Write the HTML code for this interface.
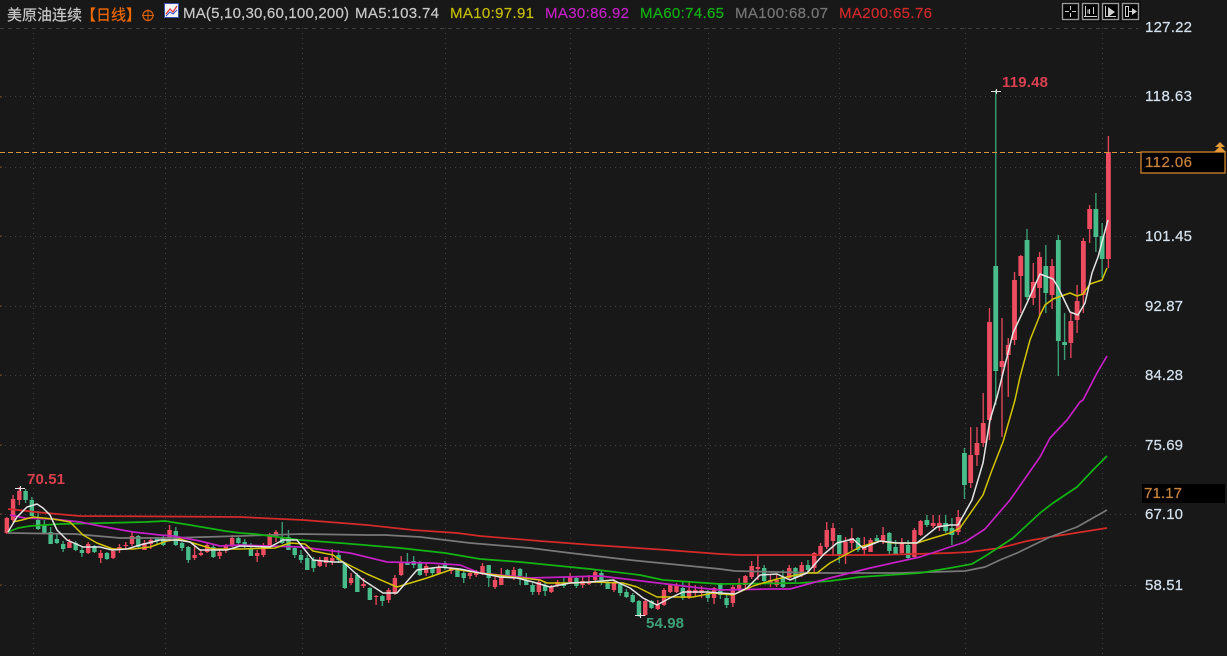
<!DOCTYPE html>
<html><head><meta charset="utf-8"><title>美原油连续</title>
<style>
html,body{margin:0;padding:0;background:#181818;width:1227px;height:656px;overflow:hidden}
svg{display:block;position:absolute;left:0;top:0;filter:blur(.35px)}
text{font-family:"Liberation Sans","Noto Sans CJK SC",sans-serif;font-size:15px;fill:currentColor;stroke:currentColor;stroke-width:.2}
.ax{color:#d4e0ec}
.b{font-weight:bold;font-size:15px;stroke-width:0}
</style></head><body>
<svg id="c" width="1227" height="656" viewBox="0 0 1227 656" xmlns="http://www.w3.org/2000/svg">
<rect width="1227" height="656" fill="#181818"/>
<g stroke="#404040" stroke-width="1" stroke-dasharray="1 4" shape-rendering="crispEdges">
<path d="M0 96.5H1138M0 167.5H1138M0 236.5H1138M0 306.5H1138M0 375.5H1138M0 445.5H1138M0 514.5H1138M0 585.5H1138"/>
<path d="M33.5 28V656M165.5 28V656M302.5 28V656M445.5 28V656M570.5 28V656M708.5 28V656M839.5 28V656M965.5 28V656M1102.5 28V656"/>
</g>
<path d="M0 28.5H1138" stroke="#404040" stroke-dasharray="4 4" shape-rendering="crispEdges"/>
<path d="M0 97h2M0 167h2M0 236h2M0 306h2M0 375h2M0 445h2M0 514h2M0 585h2" stroke="#6b4a20" shape-rendering="crispEdges"/>
<g id="candles"></g>
<g fill="none" stroke-linejoin="round" stroke-width="1.5">
<polyline stroke="#d42a2a" stroke-width="1.7" points="8,509 27,511 35,512 46,513 68,515 80,516 240,517 303,520 367,525 413,530 457,533 480,536 540,541 593,545 667,550 720,554 740,555 810,555 880,555 950,553 970,552 1000,548 1027,541 1050,537 1107,528"/>
<polyline stroke="#787878" stroke-width="1.7" points="8,533 75,534 120,538 170,538 240,536 300,534 367,535 385,535 420,537 470,543 530,548 570,553 630,560 680,565 720,569 735,571 820,573 900,573 965,571 985,567 1000,560 1017,553 1050,537 1077,527 1107,510"/>
<polyline stroke="#14b414" stroke-width="1.7" points="8,532 18,528 30,526 60,524 105,523 145,522 165,521 190,525 225,531 240,533 255,534 300,540 340,543 400,548 445,553 480,559 520,562 560,566 590,569 640,575 663,580 720,584 800,583 830,581 860,577 920,573 950,568 972,564 987,555 1013,538 1040,513 1053,503 1077,487 1093,470 1107,456"/>
<polyline stroke="#c420c4" stroke-width="1.7" points="10,515 25,518 53,519 80,522 100,526 133,532 160,535 173,536 200,541 220,546 240,545 300,547 350,553 387,562 430,563 460,565 480,573 530,578 600,576 650,582 700,588 720,590 770,589 790,589 830,578 870,568 920,557 950,547 965,542 985,529 1010,500 1040,457 1050,438 1067,420 1080,402 1083,400 1097,373 1107,356"/>
<polyline stroke="#d2c400" points="13,522 22,520 33,517 53,519 70,522 83,535 97,543 113,549 133,549 150,547 167,541 180,539 193,543 213,549 240,549 275,548 290,543 305,544 313,551 333,555 343,562 367,574 397,587 427,578 453,569 480,573 513,577 540,580 547,583 573,583 593,582 623,583 637,587 657,597 693,597 713,593 733,595 753,586 777,579 807,573 817,573 830,563 860,547 880,541 893,543 917,543 933,538 950,533 960,528 983,495 992,470 1003,442 1015,400 1020,377 1030,340 1040,315 1045,305 1053,299 1070,293 1077,296 1083,294 1090,284 1102,280 1107,268"/>
<polyline stroke="#e4e4e4" points="8,532 17,517 27,507 37,504 43,508 50,515 57,530 67,540 83,547 100,547 112,550 127,549 140,545 160,540 177,540 190,542 200,550 227,550 240,546 270,547 283,540 297,540 313,560 333,562 343,562 363,580 383,593 397,593 417,570 440,567 460,569 480,573 500,577 517,578 533,582 550,587 570,583 590,582 613,580 630,588 643,598 657,605 670,598 683,592 707,592 720,593 735,594 747,588 760,575 777,574 790,580 807,573 823,555 837,543 853,539 863,548 880,541 897,543 917,543 937,527 950,525 958,525 972,500 983,463 990,420 997,397 1013,333 1027,303 1040,274 1053,279 1058,287 1070,312 1078,315 1085,303 1092,273 1098,257 1108,220"/>
</g>
<path d="M15 488.5h10M20.5 486v5M991 91.5h10M996.5 89v5M635 615.5h10M640.5 613v5" stroke="#e0e0e0" shape-rendering="crispEdges"/>
<path d="M0 152.5H1141" stroke="#d9943a" stroke-dasharray="5 3" shape-rendering="crispEdges"/>

<text x="7" y="20" color="#c8c8c8" textLength="75">美原油连续</text>
<text x="81" y="20" color="#ee6a00" textLength="60">【日线】</text>
<circle cx="148" cy="15.5" r="5" fill="none" stroke="#d9600a" stroke-width="1.2"/>
<path d="M142 15.5h12M148 9.5v12" stroke="#d9600a" shape-rendering="crispEdges"/>
<rect x="164.500" y="3.500" width="14" height="14" fill="#f4f4fa" stroke="#3a4fa8"/>
<path d="M166 14l4-5 3 3 4-6" fill="none" stroke="#e03030" stroke-width="1.2"/>
<path d="M166 16l4-4 3 2 4-4" fill="none" stroke="#3050d0" stroke-width="1"/>
<text x="183" y="18" color="#c8c8c8" textLength="166">MA(5,10,30,60,100,200)</text>
<text x="355" y="18" color="#c8c8c8" textLength="84">MA5:103.74</text>
<text x="450" y="18" color="#c4bc00" textLength="84">MA10:97.91</text>
<text x="545" y="18" color="#c020c0" textLength="84">MA30:86.92</text>
<text x="640" y="18" color="#12b012" textLength="84">MA60:74.65</text>
<text x="735" y="18" color="#757575" textLength="93">MA100:68.07</text>
<text x="839" y="18" color="#cf2a2a" textLength="93">MA200:65.76</text>

<rect x="1060" y="1" width="81" height="21" fill="#000" opacity=".35"/>
<g fill="#000" stroke="#9a9a9a" stroke-width="1.4">
<rect x="1062.500" y="3.500" width="16" height="16"/><rect x="1082.500" y="3.500" width="16" height="16"/><rect x="1102.500" y="3.500" width="16" height="16"/><rect x="1122.500" y="3.500" width="16" height="16"/>
</g>
<g stroke="#d0d0d0" fill="none" shape-rendering="crispEdges">
<path d="M1065 11.500h4M1072 11.500h4M1070.500 6v4M1070.500 13v4"/>
<path d="M1085.500 6v10M1084 16.500h13M1088 9.500v4M1089.500 9v5M1093.500 7v7"/>
<path d="M1105.500 6v11M1105 16.500h11"/>
<path d="M1125.500 6v11M1128.500 6v11M1125 6.500h3M1125 16.500h3M1128 11.500h5"/>
</g>
<path d="M1108 7l7 5-7 5z" fill="#d0d0d0"/>
<path d="M1132 8l5 3.500-5 3.500z" fill="#d0d0d0"/>

<text class="ax" x="1145" y="32" textLength="47">127.22</text>
<text class="ax" x="1145" y="101" textLength="47">118.63</text>
<text class="ax" x="1145" y="241" textLength="47">101.45</text>
<text class="ax" x="1145" y="311" textLength="38">92.87</text>
<text class="ax" x="1145" y="380" textLength="38">84.28</text>
<text class="ax" x="1145" y="450" textLength="38">75.69</text>
<text class="ax" x="1145" y="519" textLength="38">67.10</text>
<text class="ax" x="1145" y="590" textLength="38">58.51</text>

<rect x="1141" y="152" width="84" height="21" fill="#000" stroke="#c07a28" stroke-width="1.400"/>
<text x="1145" y="167" color="#c8823a" textLength="47">112.06</text>
<path d="M1220 142l5 5h-10zM1220 146l6 6h-12z" fill="#e59a3a"/>
<rect x="1142" y="484" width="83" height="19" fill="#000"/>
<text x="1144" y="498" color="#c8823a" textLength="38">71.17</text>

<text class="b" x="1002" y="87" color="#d8404f" textLength="46">119.48</text>
<text class="b" x="27" y="484" color="#d8404f" textLength="38">70.51</text>
<text class="b" x="646" y="628" color="#3f9f78" textLength="38">54.98</text>
</svg>
<script>
var groups=[
[950,200,[
[1,-48,59,-64,68],[0,36,59,22.700,78],[0,9,37,-7,52],[1,9,29,5,43],[1,41,95,38,113],[1,101,120,85,133],[1,121,143,113,158],[0,142,145,113,160],[0,40,141,35,176],[1,66,95,59,109],[0,66,93,45,113],[1,57,88,52,117],[1,82,98,63,105],[0,40,97,29,100],[1,56,76,55,113],[1,80,140,72,145],[1,145,155,138,197],[1,161,167,118,237],[0,66,171,-110,205],[1,122,220,108,240],[1,223,243,193,247],[1,243,255,227,266],[1,255,283,227,288],[0,253,285,248,299],[1,317,332,310,335],[0,328,335,318,345]
]],
[720,500,[
[0,70,95,45,100],[1,70,80,45,92],[1,70,80,45,85],[0,60,75,45,80],[1,62,105,60,107],[1,90,170,85,175],[0,135,175,120,178],[1,130,160,115,165],[0,140,160,120,165],[0,100,155,95,160],[1,105,125,80,130],[0,115,125,105,130],[1,120,155,115,158],[1,135,150,110,165],[0,115,150,110,155],[1,115,130,85,150],[1,125,165,110,190],[0,105,165,105,190],[1,85,125,70,170],[1,90,140,65,145],[1,137,165,130,170],[1,160,205,155,215],[0,195,210,180,220],[1,195,225,185,230],[0,205,235,200,245],[1,205,235,195,240],[0,232,262,210,265],[1,240,255,225,260],[1,240,250,225,260],[0,205,245,195,250],[1,200,205,165,240],[1,198,230,182,235],[1,228,255,225,265],[1,255,270,235,275],[1,262,310,255,320],[0,295,315,285,325],[0,248,285,248,295]
]],
[480,530,[
[1,175,205,170,220],[0,190,205,180,215],[1,180,190,168,205],[1,180,190,165,200],[1,180,205,155,205],[0,175,205,155,210],[1,165,185,160,190],[1,165,185,165,190],[1,180,225,175,230],[1,225,238,210,240],[0,213,235,210,237],[1,212,255,208,258],[0,212,255,210,262],[0,195,217,190,220],[0,185,200,178,205],[0,163,190,160,200],[1,155,178,148,188],[0,158,177,150,178],[0,130,150,120,165],[1,125,150,120,160],[1,155,160,135,165],[1,152,165,140,172],[0,145,170,140,172],[1,140,155,130,160],[0,160,170,140,172],[1,155,168,150,170],[1,170,185,165,188],[0,165,182,160,200],[1,155,185,150,195],[0,165,185,160,195],[0,150,165,128,165],[0,118,138,115,165],[1,120,140,112,150],[0,120,135,118,140],[1,140,165,115,165],[1,150,170,140,177],[0,105,145,105,172],[1,108,130,100,135]
]],
[240,510,[
[1,185,195,180,200],[1,190,200,185,207],[0,190,205,180,220],[0,180,200,175,202],[1,175,185,170,190],[0,160,175,152,180],[1,170,190,165,192],[0,175,190,170,200],[1,168,188,160,198],[0,160,195,152,197],[0,152,165,138,175],[0,155,165,128,165],[1,155,195,138,197],[1,205,250,195,255],[1,240,270,235,280],[0,258,272,255,288],[1,258,262,255,285],[0,233,268,230,270],[1,222,228,205,235],[0,195,247,190,248],[1,205,220,188,225],[0,160,235,155,236],[0,135,150,120,158],[1,145,155,118,165],[1,140,158,140,170],[1,152,168,140,170],[0,150,175,140,185],[0,145,180,135,180],[0,135,150,120,158],[0,115,135,110,142],[0,80,118,60,120],[0,85,100,35,100],[1,65,80,60,95],[1,78,108,68,110],[1,110,135,98,140],[1,130,140,120,155],[0,115,138,100,140],[0,95,110,88,115]
]],
[0,470,[
[0,205,220,200,225],[1,205,225,195,232],[1,228,240,222,248],[1,245,258,240,268],[0,232,262,225,263],[1,225,245,215,248],[1,250,255,238,258],[1,255,265,225,270],[0,232,270,228,278],[0,220,235,215,243],[0,182,225,170,228],[1,180,205,165,210],[0,205,225,195,228],[0,205,215,200,220],[1,210,222,200,235],[1,218,238,210,240],[0,198,232,195,235],[1,198,222,185,228],[1,225,228,215,235],[1,230,240,222,250],[1,243,265,235,268],[0,250,268,245,270],[1,250,265,240,278],[0,228,245,225,248],[1,222,248,215,250],[0,240,250,232,262],[0,218,240,212,242],[1,215,232,208,235],[0,222,238,212,245],[0,208,220,190,222],[0,185,220,170,222],[0,165,190,150,192],[0,150,178,122,180],[0,90,138,82,140],[0,62,88,58,100],[1,62,90,50,105],[1,88,150,75,155],[1,145,190,140,192]
]]
];
var ns='http://www.w3.org/2000/svg',g=document.getElementById('candles'),k=0;
function R(x,y,w,h,f){var r=document.createElementNS(ns,'rect');r.setAttribute('x',x);r.setAttribute('y',y);r.setAttribute('width',w);r.setAttribute('height',Math.max(h,1));r.setAttribute('fill',f);g.appendChild(r);}
groups.forEach(function(G,i){
  var oy=G[1],abs=(i===0);
  G[2].forEach(function(c){
    var t,b,h,l;
    if(abs){t=oy+c[1];b=oy+c[2];h=oy+c[3];l=oy+c[4];}
    else{t=oy+c[1]/3;b=oy+c[2]/3;h=oy+c[3]/3;l=oy+c[4]/3;}
    if(abs&&k===0){t=152;b=259;h=136;l=268;}
    var cx=1108.4-6.259*k;
    var col=c[0]?'#ee4c60':'#48bc8a',wk=c[0]?'#dc4658':'#3a9c72';
    R(cx-0.7,Math.round(h),1.4,Math.round(l-h),wk);
    var w=k<30?4.8:4.4;
    R(cx-w/2,Math.round(t),w,Math.round(b-t),col);
    k++;
  });
});
</script>
</body></html>
